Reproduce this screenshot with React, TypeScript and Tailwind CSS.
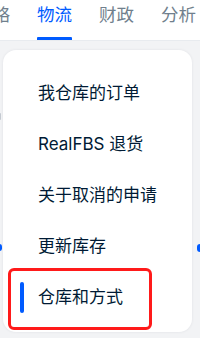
import React from "react";

const font = { fontFamily: '"Inter", "Noto Sans CJK SC", sans-serif' };

export default function App() {
  const items = ["我仓库的订单", "RealFBS 退货", "关于取消的申请", "更新库存"];
  return (
    <div
      className="relative w-[200px] h-[338px] overflow-hidden bg-[#f2f3f5]"
      style={font}
    >
      {/* top tabs */}
      <div className="h-[41px] bg-white border-b border-[#e8ebef] flex items-stretch overflow-hidden">
        <div className="flex gap-[27px] ml-[-25px] whitespace-nowrap">
          <div className="flex flex-col pt-[5px] text-[17.5px] leading-[20px] text-[#707f8d]">策略</div>
          <div className="flex flex-col justify-between pt-[5px] text-[17.5px] leading-[20px] text-[#005bff]">
            <span>物流</span>
            <span className="block h-[3px] w-full bg-[#005bff] rounded-t-[1px]" />
          </div>
          <div className="flex flex-col pt-[5px] text-[17.5px] leading-[20px] text-[#707f8d]">财政</div>
          <div className="flex flex-col pt-[5px] text-[17.5px] leading-[20px] text-[#707f8d]">分析</div>
        </div>
      </div>

      {/* peeking dots behind card */}
      <div className="absolute left-[-3px] top-[244px] w-[5px] h-[7px] rounded-full bg-[#005bff]" />
      <div className="absolute right-[-3px] top-[244px] w-[6px] h-[8px] rounded-full bg-[#005bff]" />
      <div className="absolute left-[-1px] top-[113px] w-[2px] h-[7px] rounded-full bg-[#c4cad1]" />

      {/* menu card */}
      <div className="relative mt-[9px] ml-[3px] w-[189px] h-[282px] rounded-[13px] bg-white shadow-[0_0_3px_rgba(0,26,52,0.08)] pt-[18px]">
        {items.map((t) => (
          <div
            key={t}
            className="h-[51px] flex items-center pl-[35px] text-[17px] text-[#001a34] whitespace-nowrap"
          >
            {t}
          </div>
        ))}
        <div className="relative h-[51px] flex items-center pl-[35px] text-[17px] text-[#001a34] whitespace-nowrap">
          <span className="absolute left-[17px] top-[10px] w-[4px] h-[31px] rounded-full bg-[#005bff]" />
          仓库和方式
          <span className="absolute left-[5px] top-[-4px] w-[144px] h-[62px] border-[3px] border-[#ff1a1a] rounded-[6px]" />
        </div>
      </div>
    </div>
  );
}
